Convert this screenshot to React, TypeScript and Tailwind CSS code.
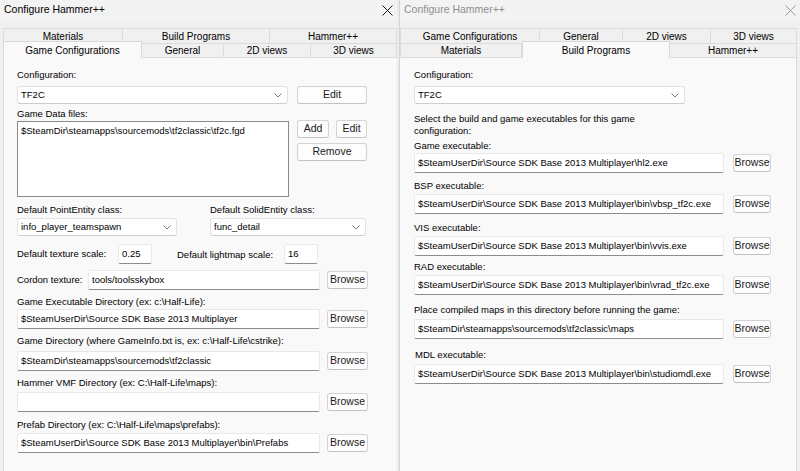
import type { ReactNode } from "react";

const FONT = { fontFamily: '"Liberation Sans", Arial, sans-serif' };

function Chevron() {
  return (
    <svg width="8" height="5" viewBox="0 0 8 5" className="shrink-0">
      <path d="M0.5 0.5 L4 4 L7.5 0.5" fill="none" stroke="#6b6b6b" strokeWidth="0.9" />
    </svg>
  );
}

function CloseIcon({ color }: { color: string }) {
  return (
    <svg width="11" height="11" viewBox="0 0 11 11">
      <path d="M0.5 0.5 L10.5 10.5 M10.5 0.5 L0.5 10.5" stroke={color} strokeWidth="1" />
    </svg>
  );
}

function Btn({ children, className = "" }: { children: ReactNode; className?: string }) {
  return (
    <div
      className={`h-[18px] shrink-0 rounded-[3px] border border-[#d3d3d3] border-b-[#c2c2c2] bg-[#fdfdfd] flex items-center justify-center text-[10.5px] text-[#1a1a1a] ${className}`}
    >
      {children}
    </div>
  );
}

function TextBox({ value = "", className = "" }: { value?: string; className?: string }) {
  return (
    <div
      className={`h-[20px] shrink-0 bg-white border border-[#e8e8e8] border-b-[#8c8c8c] rounded-[2px] pl-[3px] flex items-center text-[9.5px] text-black whitespace-nowrap overflow-hidden ${className}`}
    >
      {value}
    </div>
  );
}

function Select({ value, className = "" }: { value: string; className?: string }) {
  return (
    <div
      className={`h-[18px] shrink-0 bg-white border border-[#e3e3e3] border-b-[#cdcdcd] rounded-[3px] pl-[3px] pr-[5px] flex items-center justify-between text-[9.5px] text-black ${className}`}
    >
      <span>{value}</span>
      <Chevron />
    </div>
  );
}

function Label({ children, className = "" }: { children: ReactNode; className?: string }) {
  return <div className={`h-[14px] leading-[14px] text-[9.5px] text-black whitespace-nowrap ${className}`}>{children}</div>;
}

type Tab = { label: string; w: string; selected?: boolean };

function TabRow({ tabs, front }: { tabs: Tab[]; front?: boolean }) {
  return (
    <div className="flex h-[15px]">
      {tabs.map((t) =>
        t.selected ? (
          <div
            key={t.label}
            className={`${t.w} -mt-[2px] h-[17px] bg-[#f9f9f9] border-x border-t border-[#d9d9d9] flex items-start justify-center pt-[1px] text-[10px] text-black relative z-10`}
          >
            {t.label}
          </div>
        ) : (
          <div
            key={t.label}
            className={`${t.w} h-[15px] bg-[#f0f0f0] border-t border-r border-[#dcdcdc] first:border-l flex items-center justify-center text-[10px] text-black ${front ? "border-b border-b-[#dcdcdc]" : ""}`}
          >
            {t.label}
          </div>
        )
      )}
    </div>
  );
}

function TitleBar({ active }: { active: boolean }) {
  return (
    <div className="h-[20px] flex items-center justify-between pl-[4px] pr-[4px] bg-[#f3f3f3]">
      <span className={`text-[10.5px] ${active ? "text-black" : "text-[#8e8e8e]"}`}>Configure Hammer++</span>
      <CloseIcon color={active ? "#1a1a1a" : "#9a9a9a"} />
    </div>
  );
}

function GameConfigWindow() {
  return (
    <div className="w-[397px] h-full flex flex-col bg-[#f0f0f0]">
      <TitleBar active />
      <div className="pl-[3px] pt-[8px] flex-1 flex flex-col">
        <TabRow
          tabs={[
            { label: "Materials", w: "w-[120px]" },
            { label: "Build Programs", w: "w-[147px]" },
            { label: "Hammer++", w: "w-[127px]" },
          ]}
        />
        <TabRow
          front
          tabs={[
            { label: "Game Configurations", w: "w-[139px]", selected: true },
            { label: "General", w: "w-[82px]" },
            { label: "2D views", w: "w-[87px]" },
            { label: "3D views", w: "w-[86px]" },
          ]}
        />
        <div className="flex-1 bg-[#f9f9f9] border-l border-[#d9d9d9] pl-[13px] pt-[10px] flex flex-col">
          <Label>Configuration:</Label>
          <div className="mt-[4px] flex">
            <Select value="TF2C" className="w-[271px]" />
            <Btn className="ml-[9px] w-[70px]">Edit</Btn>
          </div>
          <Label className="mt-[3px]">Game Data files:</Label>
          <div className="flex">
            <div className="w-[272px] h-[76px] bg-white border border-[#8a8a8a] pl-[3px] pt-[2px] text-[9.5px] text-black">
              $SteamDir\steamapps\sourcemods\tf2classic\tf2c.fgd
            </div>
            <div className="ml-[8px] -mt-[1px] flex flex-col w-[70px]">
              <div className="flex justify-between">
                <Btn className="w-[32px]">Add</Btn>
                <Btn className="w-[31px]">Edit</Btn>
              </div>
              <Btn className="mt-[5px] w-[70px]">Remove</Btn>
            </div>
          </div>
          <div className="mt-[6px] flex gap-[33px]">
            <div className="flex flex-col w-[160px]">
              <Label>Default PointEntity class:</Label>
              <Select value="info_player_teamspawn" className="mt-[1px] w-[160px]" />
            </div>
            <div className="flex flex-col w-[156px]">
              <Label>Default SolidEntity class:</Label>
              <Select value="func_detail" className="mt-[1px] w-[156px]" />
            </div>
          </div>
          <div className="mt-[8px] flex items-center">
            <Label className="w-[101px]">Default texture scale:</Label>
            <TextBox value="0.25" className="w-[34px]" />
            <Label className="ml-[25px] w-[107px] mt-[2px]">Default lightmap scale:</Label>
            <TextBox value="16" className="w-[34px]" />
          </div>
          <div className="mt-[6px] flex items-center">
            <Label className="w-[71px]">Cordon texture:</Label>
            <TextBox value="tools/toolsskybox" className="w-[232px]" />
            <Btn className="ml-[7px] w-[41px]">Browse</Btn>
          </div>
          <Label className="mt-[5px]">Game Executable Directory (ex: c:\Half-Life):</Label>
          <div className="flex items-center">
            <TextBox value="$SteamUserDir\Source SDK Base 2013 Multiplayer" className="w-[303px]" />
            <Btn className="ml-[7px] w-[41px]">Browse</Btn>
          </div>
          <Label className="mt-[5px]">Game Directory (where GameInfo.txt is, ex: c:\Half-Life\cstrike):</Label>
          <div className="mt-[3px] flex items-center">
            <TextBox value="$SteamDir\steamapps\sourcemods\tf2classic" className="w-[303px]" />
            <Btn className="ml-[7px] w-[41px]">Browse</Btn>
          </div>
          <Label className="mt-[5px]">Hammer VMF Directory (ex: C:\Half-Life\maps):</Label>
          <div className="mt-[2px] flex items-center">
            <TextBox className="w-[303px]" />
            <Btn className="ml-[7px] w-[41px]">Browse</Btn>
          </div>
          <Label className="mt-[6px]">Prefab Directory (ex: C:\Half-Life\maps\prefabs):</Label>
          <div className="mt-[1px] flex items-center">
            <TextBox value="$SteamUserDir\Source SDK Base 2013 Multiplayer\bin\Prefabs" className="w-[303px]" />
            <Btn className="ml-[7px] w-[41px]">Browse</Btn>
          </div>
        </div>
      </div>
    </div>
  );
}

const buildRows = [
  { label: "Game executable:", value: "$SteamUserDir\\Source SDK Base 2013 Multiplayer\\hl2.exe", lt: "mt-[2px]", it: "mt-0" },
  { label: "BSP executable:", value: "$SteamUserDir\\Source SDK Base 2013 Multiplayer\\bin\\vbsp_tf2c.exe", lt: "mt-[6px]", it: "mt-[1px]" },
  { label: "VIS executable:", value: "$SteamUserDir\\Source SDK Base 2013 Multiplayer\\bin\\vvis.exe", lt: "mt-[7px]", it: "mt-[1px]" },
  { label: "RAD executable:", value: "$SteamUserDir\\Source SDK Base 2013 Multiplayer\\bin\\vrad_tf2c.exe", lt: "mt-[4px]", it: "mt-[1px]" },
  { label: "Place compiled maps in this directory before running the game:", value: "$SteamDir\\steamapps\\sourcemods\\tf2classic\\maps", lt: "mt-[8px]", it: "mt-[2px]" },
  { label: "MDL executable:", value: "$SteamUserDir\\Source SDK Base 2013 Multiplayer\\bin\\studiomdl.exe", lt: "mt-[9px] ml-[1px]", it: "mt-[2px]" },
];

function BuildProgramsWindow() {
  return (
    <div className="flex-1 h-full flex flex-col bg-[#f0f0f0]">
      <TitleBar active={false} />
      <div className="pr-[3px] pt-[8px] flex-1 flex flex-col">
        <TabRow
          tabs={[
            { label: "Game Configurations", w: "w-[140px]" },
            { label: "General", w: "w-[83px]" },
            { label: "2D views", w: "w-[88px]" },
            { label: "3D views", w: "w-[86px]" },
          ]}
        />
        <TabRow
          front
          tabs={[
            { label: "Materials", w: "w-[122px]" },
            { label: "Build Programs", w: "w-[148px]", selected: true },
            { label: "Hammer++", w: "w-[127px]" },
          ]}
        />
        <div className="flex-1 bg-[#f9f9f9] border-r border-[#d9d9d9] pl-[14px] pt-[10px] flex flex-col">
          <Label>Configuration:</Label>
          <Select value="TF2C" className="mt-[4px] w-[271px]" />
          <div className="mt-[9px] text-[9.5px] leading-[12px] text-black">
            Select the build and game executables for this game
            <br />
            configuration:
          </div>
          {buildRows.map((r) => (
            <div key={r.label} className="flex flex-col">
              <Label className={r.lt}>{r.label}</Label>
              <div className={`${r.it} flex items-center`}>
                <TextBox value={r.value} className="w-[310px]" />
                <Btn className="ml-[9px] w-[38px]">Browse</Btn>
              </div>
            </div>
          ))}
        </div>
      </div>
    </div>
  );
}

export default function App() {
  return (
    <div className="w-[800px] h-[471px] flex overflow-hidden bg-[#f0f0f0]" style={FONT}>
      <GameConfigWindow />
      <div className="w-[3px] h-full flex">
        <div className="w-[2px] bg-[#ececec]" />
        <div className="w-[1px] bg-[#d4d4d4]" />
      </div>
      <BuildProgramsWindow />
    </div>
  );
}
